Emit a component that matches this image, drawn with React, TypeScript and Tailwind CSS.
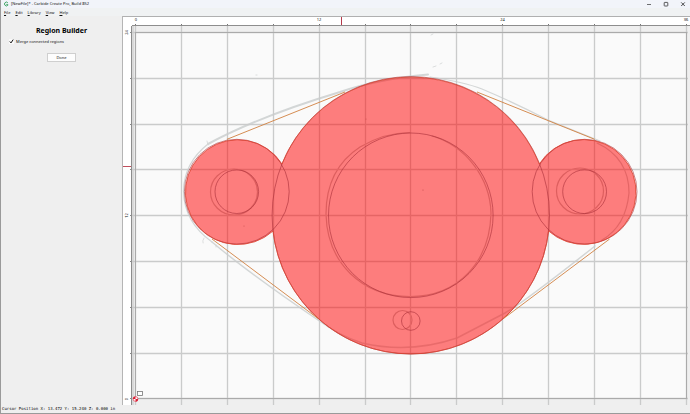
import { useState } from "react";

const columns = [135.5, 181.5, 227.5, 273.5, 319.5, 365.5, 410.5, 456.5, 502.5, 548.5, 594.5, 640.5, 686.5];
const rows = [32.5, 78.5, 124.5, 169.5, 215.5, 261.5, 307.5, 353.5, 398.5];
const menus = ["File", "Edit", "Library", "View", "Help"];

const mergedOutline =
  "M273 231A138.700 138.700 0 0 0 548.600 231A52.400 52.400 0 1 0 539.300 164A138.700 138.700 0 0 0 282 164A52.400 52.400 0 1 0 273 231Z";

function Logo() {
  return (
    <svg className="h-[6px] w-[6px]" viewBox="0 0 12 12" aria-hidden="true">
      <path d="M9.600 3.400A3.800 3.800 0 1 0 9.600 8.600V6.800H6.600" fill="none" stroke="#3fa566" strokeWidth="2" />
    </svg>
  );
}

function TitleBar() {
  return (
    <header className="flex h-2 shrink-0 items-center bg-[#f2f4fa] pl-[2px] pr-1 text-[#111]">
      <Logo />
      <h1 className="ml-[2px] flex-1 whitespace-nowrap text-[4px] leading-[8px]">[NewFile]* - Carbide Create Pro, Build 852</h1>
      <div className="flex items-center gap-[11px]">
        <button aria-label="Minimize" className="flex">
          <svg className="h-[6px] w-[6px]" viewBox="0 0 6 6"><path d="M1 3.5h4" stroke="#333" strokeWidth=".7" /></svg>
        </button>
        <button aria-label="Maximize" className="flex">
          <svg className="h-[6px] w-[6px]" viewBox="0 0 6 6"><rect x="1.2" y="1.4" width="3.6" height="3.6" rx=".5" fill="none" stroke="#333" strokeWidth=".8" /></svg>
        </button>
        <button aria-label="Close" className="flex">
          <svg className="h-[6px] w-[6px]" viewBox="0 0 6 6"><path d="M1.2 1.4l3.6 3.6M4.8 1.4L1.2 5" stroke="#222" strokeWidth=".8" /></svg>
        </button>
      </div>
    </header>
  );
}

function MenuBar() {
  return (
    <nav className="flex h-2 shrink-0 items-center gap-[5px] bg-[#f0f2f3] pl-[3px] pt-[2px] text-[4px] leading-[8px] text-[#111]">
      {menus.map((name) => (
        <button key={name} className="whitespace-nowrap">
          <span className="underline decoration-1">{name[0]}</span>
          {name.slice(1)}
        </button>
      ))}
    </nav>
  );
}

function Sidebar() {
  const [merge, setMerge] = useState(true);
  return (
    <aside className="w-[121px] shrink-0 px-[8px] pt-[10px]">
      <h2 className="text-center text-[7px] font-bold leading-[10px] text-black">Region Builder</h2>
      <label className="mt-[2px] flex items-center gap-[2px] text-[4px] leading-[7px] text-[#111]">
        <span className="relative flex">
          <input
            type="checkbox"
            checked={merge}
            onChange={() => setMerge(!merge)}
            className="h-[5px] w-[5px] appearance-none bg-[#fafafa]"
          />
          {merge && (
            <svg className="pointer-events-none absolute inset-0 h-[5px] w-[5px]" viewBox="0 0 5 5" aria-hidden="true">
              <path d="M.8 2.5l1.2 1.4L4.2.6" fill="none" stroke="#111" strokeWidth="1" />
            </svg>
          )}
        </span>
        Merge connected regions
      </label>
      <button className="mx-auto mt-[8px] block h-[9px] w-[29px] border border-[#cfcfcf] bg-[#fdfdfd] text-[4px] leading-[7px] text-[#111]">
        Done
      </button>
    </aside>
  );
}

function TopRuler() {
  return (
    <svg className="h-[9px] w-full bg-white" aria-label="Horizontal ruler">
      <g transform="translate(-132 -17)">
        {columns.map((x) => (
          <path key={x} d={`M${x} 24v2`} stroke="#777" strokeWidth="1" />
        ))}
        <g className="text-[4px]" fill="#111" textAnchor="middle">
          <text x="136" y="21">0</text>
          <text x="319" y="21">12</text>
          <text x="502.5" y="21">24</text>
          <text x="686" y="21">36</text>
        </g>
        <path d="M341.5 17v9" stroke="#b5384a" strokeWidth="1" />
        <path d="M132 25.5h2000" stroke="#8d8d8d" strokeWidth="1" />
      </g>
    </svg>
  );
}

function SideRuler() {
  return (
    <svg className="h-full w-[8px] bg-white" aria-label="Vertical ruler">
      <g transform="translate(-123 -26)">
        {rows.map((y) => (
          <path key={y} d={`M130 ${y}h2`} stroke="#888" strokeWidth="1" />
        ))}
        <g className="text-[4px]" fill="#111" textAnchor="middle">
          <text transform="translate(128 32.5) rotate(-90)">24</text>
          <text transform="translate(128 215.5) rotate(-90)">12</text>
          <text transform="translate(128 399) rotate(-90)">0</text>
        </g>
        <path d="M123 166.5h9" stroke="#c04e5c" strokeWidth="1" />
      </g>
    </svg>
  );
}

function Sketch() {
  return (
    <g fill="none" stroke="#d3d6d6" strokeLinecap="round">
      <path d="M208 144Q260 116 340 92Q378 79 428 74.500" strokeWidth="2" />
      <path d="M430 77Q464 82 482 89Q515 103 548 120L600 141" strokeWidth="1.200" />
      <path d="M208 144Q184 163 183.500 191Q184 222 212 242" strokeWidth="1.200" />
      <path d="M212 242Q250 274 318 320Q340 336 362 343Q410 354 457 338L505 313Q523 303 595 246" strokeWidth="1.500" />
      <path d="M597 143Q629 158 629 193Q626 226 602 240" stroke="#c8cbcb" strokeWidth="1.200" />
      <path d="M410 132.500C390 132.500 372 140 360 147C337 162 326 185 326 214C327 262 361 296.500 410 296.500C458 296.500 490 262 491 213C490 178 466 146 432 136" stroke="#bcbdbd" strokeWidth="1.200" />
      <g stroke="#bcbdbd" strokeWidth="1.200">
        <ellipse cx="234" cy="192" rx="23.500" ry="23" />
        <ellipse cx="580" cy="191" rx="23.500" ry="23" />
        <ellipse cx="402.500" cy="320" rx="9.500" ry="9.500" />
      </g>
      <path d="M207 141l1 4M204 238q-2 3-1 5M216 245v2M433 67l3-1M440 64l2-1M431 35l2-1M256 75h1" strokeWidth=".8" />
    </g>
  );
}

function Canvas() {
  return (
    <svg className="h-full w-full bg-[#efefef]" role="img" aria-label="Design canvas">
      <g transform="translate(-132 -26)">
        <path d="M133 26v380" stroke="#d8d8d8" strokeWidth="2" />
        <rect x="135.500" y="32.500" width="551" height="366" fill="#fafafa" />
        <Sketch />
        <g stroke="#cacbcb" strokeWidth="1.300">
          {columns.map((x) => <path key={x} d={`M${x} 26V405`} />)}
          {rows.map((y) => <path key={y} d={`M132 ${y}H688`} />)}
        </g>
        <rect x="135.500" y="32.500" width="551" height="366" fill="none" stroke="#aaa" strokeWidth="1" />
        <path d={mergedOutline} fill="#ff0000" fillOpacity=".5" />
        <g fill="none" stroke="#a82d38" strokeWidth=".6">
          <circle cx="410.800" cy="215.300" r="138.700" />
          <circle cx="410.800" cy="215.300" r="82.300" />
          <circle cx="236.800" cy="191.700" r="52.400" />
          <circle cx="236.800" cy="191.700" r="21.800" />
          <circle cx="584.600" cy="191.700" r="52.400" />
          <circle cx="584.600" cy="191.700" r="21.900" />
          <circle cx="410.800" cy="321" r="9.300" />
        </g>
        <path d={mergedOutline} fill="none" stroke="#dc4330" strokeWidth=".8" />
        <path
          d="M227 139.300L345 92M212 239L318 318.500M594.600 139.300L477 92M609.600 239L503.600 318.500"
          stroke="#d0803f"
          strokeWidth=".9"
        />
        <g>
          <circle cx="135.500" cy="399" r="2.600" fill="#fff" />
          <path d="M135.500 399v-2.600a2.600 2.600 0 0 0-2.600 2.600zM135.500 399v2.600a2.600 2.600 0 0 0 2.600-2.600z" fill="#d91f35" />
          <circle cx="135.500" cy="399" r="2.400" fill="none" stroke="#d91f35" strokeWidth=".6" />
          <rect x="137.500" y="391.500" width="5" height="4" fill="#fff" stroke="#777" strokeWidth=".8" />
        </g>
        <g fill="#c84e50">
          <circle cx="423" cy="190" r=".6" />
          <circle cx="366" cy="119" r=".5" />
          <circle cx="244" cy="226" r=".5" />
        </g>
      </g>
    </svg>
  );
}

export default function App() {
  return (
    <div className="flex h-screen flex-col overflow-hidden border-b border-l border-[#9a9a9a] bg-[#efefef] font-['Noto_Sans','Open_Sans',sans-serif]">
      <TitleBar />
      <MenuBar />
      <div className="flex min-h-0 flex-1">
        <Sidebar />
        <main className="grid min-w-0 flex-1 grid-cols-[9px_1fr] grid-rows-[10px_1fr] border-l border-[#b5b5b5]">
          <div className="border-t border-[#b0b0b0] bg-white" />
          <div className="border-t border-[#b0b0b0]"><TopRuler /></div>
          <div className="min-h-0 border-r border-[#8d8d8d]"><SideRuler /></div>
          <div className="min-h-0 min-w-0"><Canvas /></div>
        </main>
      </div>
      <footer className="h-2 shrink-0 whitespace-pre pl-px font-['DejaVu_Sans_Mono',monospace] text-[4px] leading-[8px] text-black">
        Cursor Position X: 13.472 Y: 15.240 Z: 0.000 in
      </footer>
    </div>
  );
}
